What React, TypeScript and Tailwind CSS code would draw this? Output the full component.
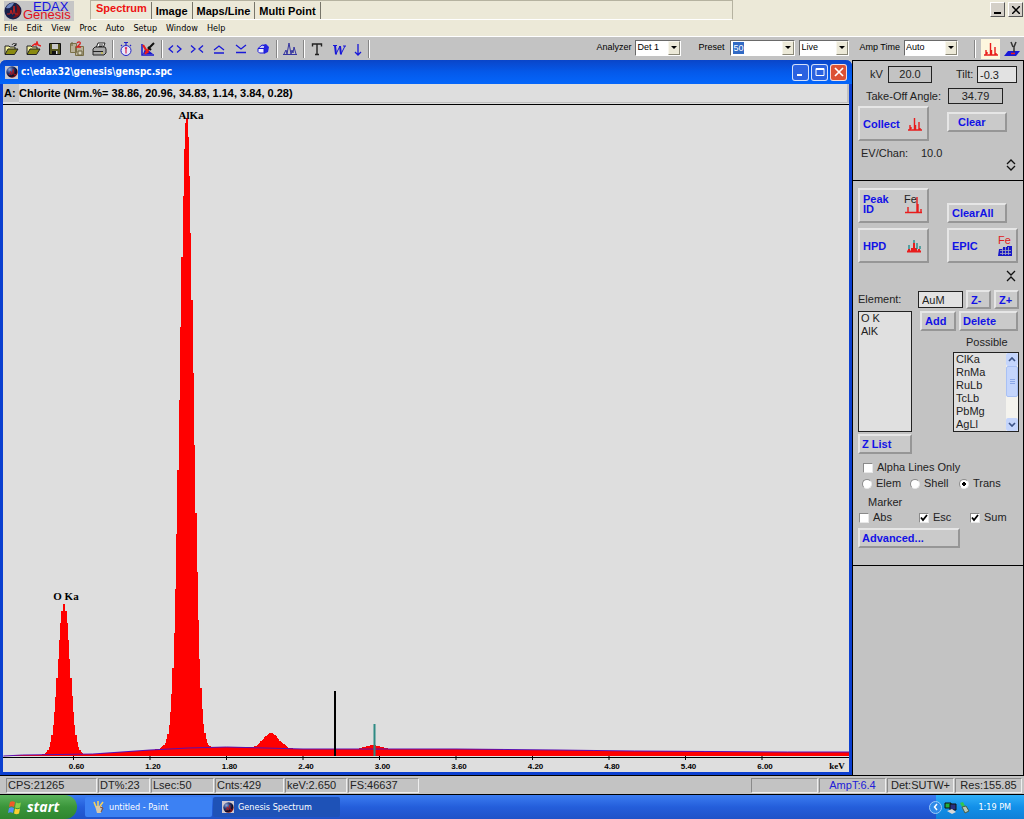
import { useState } from 'react';
import type { ReactNode } from 'react';

const TAHOMA = "font-['DejaVu_Sans_Condensed','DejaVu_Sans',sans-serif]";

// ---------- spectrum data ----------

const PX_PER_KEV = 127.5;
const X_OFFSET = -6;
const BASE_Y = 651;

const peaks = [
  { keV: 0.525, height: 151, sigma: 0.047 },
  { keV: 1.487, height: 630, sigma: 0.052 },
  { keV: 1.38, height: 5, sigma: 0.06 },
  { keV: 2.15, height: 15, sigma: 0.062 },
  { keV: 2.95, height: 4, sigma: 0.06 },
];

const background: [number, number][] = [
  [0.05, 0],
  [0.2, 1],
  [0.75, 2],
  [1.2, 6],
  [1.5, 8],
  [1.8, 9],
  [2.4, 7],
  [3.6, 7],
  [4.4, 6],
  [5.0, 5],
  [6.2, 4],
  [6.75, 4],
];

const ticks = ['0.60', '1.20', '1.80', '2.40', '3.00', '3.60', '4.20', '4.80', '5.40', '6.00'];

const toX = (keV: number) => keV * PX_PER_KEV + X_OFFSET;

function backgroundAt(keV: number) {
  for (let i = 1; i < background.length; i++) {
    const [x0, y0] = background[i - 1];
    const [x1, y1] = background[i];
    if (keV <= x1) return y0 + ((y1 - y0) * Math.max(0, keV - x0)) / (x1 - x0);
  }
  return 4;
}

// one step per 10 eV channel
function spectrumPath() {
  let d = `M0 ${BASE_Y}`;
  for (let keV = 0.06; keV < 6.69; keV += 0.01) {
    let counts = backgroundAt(keV);
    for (const p of peaks) {
      counts += p.height * Math.exp(-((keV - p.keV) ** 2) / (2 * p.sigma ** 2));
    }
    d += `H${toX(keV - 0.005).toFixed(1)}V${(BASE_Y - counts).toFixed(1)}`;
  }
  return d + `H846V${BASE_Y}Z`;
}

function Spectrum() {
  const line = background.map(([k, c]) => `${toX(k)},${BASE_Y - c}`).join(' ');
  return (
    <svg viewBox="0 0 846 667" className="block h-auto w-full bg-[#dedede]" role="img" aria-label="Spectrum">
      <path d={spectrumPath()} fill="#ff0000" shapeRendering="crispEdges" />
      <polyline points={line} fill="none" stroke="#5a10b0" strokeWidth="1" />
      <path d="M0 652.5H846" stroke="#000" />
      <path d="M332 586V651" stroke="#000" strokeWidth="2" />
      <path d="M371.5 619V651" stroke="#2e8b84" strokeWidth="2" />
      <g fontFamily="'Liberation Serif', serif" fontWeight="700" fontSize="11" textAnchor="middle">
        <text x="63" y="495">O Ka</text>
        <text x="188" y="14">AlKa</text>
      </g>
      {ticks.map((t) => (
        <g key={t}>
          <path d={`M${toX(Number(t))} 651V655`} stroke="#000" />
          <text
            x={toX(Number(t)) + 3}
            y="664"
            fontFamily="'Liberation Sans Narrow', 'Liberation Sans', sans-serif"
            fontSize="8"
            fontWeight="700"
            textAnchor="middle"
          >
            {t}
          </text>
        </g>
      ))}
      <text x="834" y="664" fontFamily="'Liberation Serif', serif" fontSize="9" fontWeight="700" textAnchor="middle">
        keV
      </text>
    </svg>
  );
}

// ---------- icons ----------

function Sphere({ className }: { className: string }) {
  return (
    <svg viewBox="0 0 18 18" className={className} aria-hidden="true">
      <defs>
        <radialGradient id="sphere" cx="30%" cy="28%" r="80%">
          <stop offset="0" stopColor="#8fa6d8" />
          <stop offset="0.4" stopColor="#283a78" />
          <stop offset="0.75" stopColor="#0c0c24" />
          <stop offset="1" stopColor="#901010" />
        </radialGradient>
      </defs>
      <circle cx="9" cy="9" r="8.5" fill="url(#sphere)" />
      <path d="M4 13h2l1-5 1 5h1l2-8 1 8h3" fill="none" stroke="#c01818" strokeWidth="1.2" />
    </svg>
  );
}

function Logo() {
  return (
    <svg viewBox="0 0 72 21" className="h-[21px] w-[72px] shrink-0 overflow-visible" role="img" aria-label="EDAX Genesis">
      <rect y="1" width="70" height="20" fill="#c6c6c6" />
      <circle cx="9" cy="11" r="8.500" fill="#182048" />
      <path d="M2 8a8 8 0 0 1 8-5c-2 4-4 6-8 5z" fill="#7088c0" />
      <path d="M12 4a8 8 0 0 1 4 10c-2 3-5 4-8 4 5-3 6-8 4-14z" fill="#7c1018" />
      <path d="M3 14h3l1-4 1 4h1l1-8 1 8h3" fill="none" stroke="#c02020" />
      <g fontFamily="'Liberation Sans', sans-serif" fontSize="13">
        <text x="29" y="11" fill="#1414e0">EDAX</text>
        <text x="19" y="19" fill="#e01020">Genesis</text>
      </g>
    </svg>
  );
}

function Icon({ children }: { children: ReactNode }) {
  return (
    <svg viewBox="0 0 16 16" className="size-4" fill="none" aria-hidden="true">
      {children}
    </svg>
  );
}

const folder = (
  <>
    <path d="M2 13V5h4l1 1h5v2" fill="#f4f09a" stroke="#222" />
    <path d="M2 13.500L5 8h10l-3.500 5.500z" fill="#8a8a10" stroke="#222" />
  </>
);

const redPeaks = <path d="M1 14h14M3 14V9M4 13V11M7.500 14V2M8.500 14V9M12 14V6M13 14v-2" stroke="#e81c1c" strokeWidth="1.4" />;

const icons: Record<string, ReactNode> = {
  Open: (
    <>
      {folder}
      <path d="M9 4c1-2 3-2 4 0m0-2v2.500h-2" stroke="#222" />
    </>
  ),
  'Open peaks': (
    <>
      {folder}
      <path d="M7 5l3-2 1 1 1-3 1 3 3 1" stroke="#e81c1c" strokeWidth="1.4" />
    </>
  ),
  Save: (
    <>
      <path d="M2.500 2.500h11v11h-11z" fill="#55551c" stroke="#111" />
      <path d="M5 3h6v5H5z" fill="#c8c8c8" />
      <path d="M5 10h6v3H5z" fill="#111" />
      <path d="M9 10h1.500v3H9z" fill="#ddd" />
    </>
  ),
  'Save as': (
    <>
      <path d="M1.500 2.500h6v9h-6zM6.500 5.500h8v9h-8z" fill="#b8b098" stroke="#7a7048" />
      <path d="M3 1v4M9 10h4v4H9z" stroke="#68603c" fill="#d8d4c0" />
      <path d="M8 2c2-2 4-1 3 1L8 6h4" stroke="#d82020" strokeWidth="1.300" />
    </>
  ),
  Print: (
    <>
      <path d="M5 7l2-5h7l-2 5" fill="#fff" stroke="#222" />
      <path d="M2 8l2-2h10l1 2v4l-2 2H2z" fill="#a8a8a8" stroke="#222" />
      <path d="M2 10.500h10M8 4h4M7.500 5.500h4" stroke="#222" />
      <path d="M10 12h2" stroke="#d8c820" />
    </>
  ),
  Timer: (
    <>
      <circle cx="8" cy="9.500" r="5" fill="#e8e8f8" stroke="#2424c8" />
      <path d="M6 1.500h4M8 1.500V4M12 4l1 1M4 4L3 5" stroke="#2424c8" strokeWidth="1.200" />
      <path d="M8 6.500v6M7 7.500l1-1 1 1" stroke="#d81c50" strokeWidth="1.200" />
    </>
  ),
  Clear: (
    <>
      <path d="M2 3v11h12" stroke="#1818d0" strokeWidth="1.500" />
      <path d="M3 13l2-5 3 1 5 4z" fill="#1818d0" />
      <path d="M3 4l5 8M5 13l4-5" stroke="#e81c1c" strokeWidth="2.200" />
      <path d="M8 8l6-6M8 6l3 3" stroke="#111" strokeWidth="2" />
    </>
  ),
  Expand: <path d="M6 4.500L2 8l4 3.500M10 4.500L14 8l-4 3.500" stroke="#1818d8" strokeWidth="1.300" />,
  Contract: <path d="M2 4.500L6 8l-4 3.500M14 4.500L10 8l4 3.500" stroke="#1818d8" strokeWidth="1.300" />,
  'Scale up': <path d="M3 9l5-4 5 4M3 12h10" stroke="#1818d8" strokeWidth="1.300" />,
  'Scale down': <path d="M3 4l5 4 5-4M3 11.500h10" stroke="#1818d8" strokeWidth="1.300" />,
  Cube: (
    <>
      <path d="M7 4l4-1 3 3-1 5-4 2V7z" fill="#2424e0" />
      <path d="M3 7.500h6v4.500H4.500L3 10.500z" fill="#eef" stroke="#1818d8" />
      <path d="M3 7.500l4-3.500 3 1-1 2.500z" fill="#c8c8f4" stroke="#1818d8" />
    </>
  ),
  Peaks: <path d="M1 13.500h14M2 13l2-4 1 4 2-11 2 11 1-4 1 3 1-6 2 7" stroke="#3434a0" strokeWidth="1" />,
  Text: <path d="M3.500 5.500V3h9v2.500M8 3v11M6 13.500h4" stroke="#222" strokeWidth="1.400" />,
  Word: (
    <>
      <path d="M4 4.500l1 9M9 5l1 8.500" stroke="#1818d8" strokeWidth="2" />
      <path d="M5 13l4-8M10 13l4-8M2 4.500h4M12 5h3" stroke="#1818d8" />
    </>
  ),
  Down: <path d="M8 3v11M5 11l3 3 3-3" stroke="#1818d8" strokeWidth="1.300" />,
};

function ToolButton({ name, narrow }: { name: string; narrow?: boolean }) {
  return (
    <button type="button" aria-label={name} className={`flex h-5 items-center justify-center ${narrow ? 'w-4' : 'w-[22px]'}`}>
      <Icon>{icons[name]}</Icon>
    </button>
  );
}

function Separator() {
  return (
    <span className="flex w-[5px] justify-center">
      <span className="h-[18px] border-l border-r border-l-[#868686] border-r-white" />
    </span>
  );
}

// ---------- header ----------

const tabs = ['Spectrum', 'Image', 'Maps/Line', 'Multi Point'];
const menus = ['File', 'Edit', 'View', 'Proc', 'Auto', 'Setup', 'Window', 'Help'];

function Header() {
  const [active, setActive] = useState('Spectrum');
  return (
    <header className="bg-[#ece9d8]">
      <div className="flex h-[21px] items-start pl-1">
        <Logo />
        <nav className="ml-[14px] flex h-5 w-[643px] items-stretch border border-[#b5b2a0] border-b-white pt-px">
          {tabs.map((tab) => (
            <button
              key={tab}
              type="button"
              onClick={() => setActive(tab)}
              className={`border-r border-[#77756a] text-[11px] leading-none font-bold ${
                tab === active ? 'pr-[4px] pb-1 pl-[5px] text-[#ee1111]' : 'px-[4px] pt-px text-black'
              }`}
            >
              {tab}
            </button>
          ))}
        </nav>
        <div className="ml-auto flex gap-[3px] pt-[2px] pr-[1px]">
          <button type="button" aria-label="Minimize" className="flex size-[15px] items-end justify-center border border-white border-r-[#555] border-b-[#555] bg-[#d4d0c8] pb-[2px]">
            <span className="h-0.5 w-[7px] bg-black" />
          </button>
          <button type="button" aria-label="Close" className="flex size-[15px] items-center justify-center border border-white border-r-[#555] border-b-[#555] bg-[#d4d0c8]">
            <svg viewBox="0 0 8 8" className="size-2" aria-hidden="true">
              <path d="M0 0l8 8M8 0L0 8" stroke="#000" strokeWidth="1.500" />
            </svg>
          </button>
        </div>
      </div>
      <nav className={`flex h-4 items-center gap-[9px] border-b border-white pl-1 text-[9px] leading-none ${TAHOMA}`}>
        {menus.map((m) => (
          <button key={m} type="button">
            {m}
          </button>
        ))}
      </nav>
    </header>
  );
}

function Arrow() {
  return (
    <span className="pointer-events-none flex w-3 shrink-0 items-center justify-center border border-[#f8f6ee] border-r-[#8a8878] border-b-[#8a8878] bg-[#ece9d8]">
      <svg viewBox="0 0 6 3" className="h-[3px] w-1.5" aria-hidden="true">
        <path d="M0 0h6L3 3z" />
      </svg>
    </span>
  );
}

const fieldClass = 'flex h-4 border border-[#6a6a6a] border-r-white border-b-white bg-white text-[9px]';

function Dropdown({ label, value, width, hideLabel }: { label: string; value: string; width: string; hideLabel?: boolean }) {
  return (
    <label className="flex items-center gap-1">
      {!hideLabel && <span>{label}</span>}
      <span className={`${fieldClass} ${width}`}>
        <select aria-label={label} defaultValue={value} className="min-w-0 flex-1 appearance-none pl-px">
          <option>{value}</option>
        </select>
        <Arrow />
      </span>
    </label>
  );
}

function Toolbar() {
  return (
    <div className="flex h-[23px] items-center bg-[#c3c3c3] text-[9px] leading-none">
      {['Open', 'Open peaks', 'Save', 'Save as', 'Print'].map((n) => (
        <ToolButton key={n} name={n} />
      ))}
      <Separator />
      <ToolButton name="Timer" />
      <ToolButton name="Clear" />
      <Separator />
      {['Expand', 'Contract', 'Scale up', 'Scale down', 'Cube'].map((n) => (
        <ToolButton key={n} name={n} />
      ))}
      <Separator />
      <ToolButton name="Peaks" />
      <Separator />
      <ToolButton name="Text" />
      <ToolButton name="Word" />
      <ToolButton name="Down" narrow />
      <Separator />

      <div className="mr-[17px] ml-auto flex pb-0.5">
        <Dropdown label="Analyzer" value="Det 1" width="w-[46px]" />
      </div>
      <label className="mr-1 flex items-center gap-1.5 pb-0.5">
        <span>Preset</span>
        <span className={`${fieldClass} w-[65px] items-stretch justify-between`}>
          <input type="text" defaultValue="50" className="my-px ml-[2px] w-[11px] bg-[#316ac5] text-white" />
          <Arrow />
        </span>
      </label>
      <div className="mr-[10px] pb-0.5">
        <Dropdown label="Preset mode" value="Live" width="w-[50px]" hideLabel />
      </div>
      <div className="mr-[14px] pb-0.5">
        <Dropdown label="Amp Time" value="Auto" width="w-[54px]" />
      </div>
      <Separator />
      <button type="button" aria-label="Spectrum view" className="ml-[4px] flex h-5 w-[19px] items-center justify-center bg-[#fdf6de]">
        <Icon>{redPeaks}</Icon>
      </button>
      <button type="button" aria-label="Stage view" className="mr-1 ml-1 flex h-5 w-4 items-center justify-center">
        <Icon>
          <path d="M4 10h12l-4 5H0z" fill="#1818d8" />
          <path d="M7 1l2 5M12 1l-2 5v5" stroke="#333" strokeWidth="1.500" />
          <path d="M7 12.500h4" stroke="#e81c1c" strokeWidth="1.500" />
        </Icon>
      </button>
    </div>
  );
}

// ---------- spectrum window ----------

const captionButton = 'flex size-[17px] items-center justify-center rounded-[3px] border border-white/80';

function SpectrumWindow() {
  return (
    <section className="min-w-0 flex-1 rounded-t-md border-x-[3px] border-b-[3px] border-[#0b3fd0] bg-[#dedede]">
      <div className="-mx-[3px] flex h-6 items-center rounded-t-md bg-linear-to-b from-[#0a45c8] via-[#0459ea] to-[#0466fb] px-[5px]">
        <span className="mr-[3px] flex size-[13px] items-center justify-center bg-[#c8c8d0]">
          <Sphere className="size-3" />
        </span>
        <h1 className={`text-[10px] leading-none font-bold text-white ${TAHOMA}`}>c:\edax32\genesis\genspc.spc</h1>
        <div className="ml-auto flex gap-0.5">
          <button type="button" aria-label="Minimize" className={`${captionButton} bg-[#2b62e0]`}>
            <svg viewBox="0 0 12 12" className="size-3" aria-hidden="true">
              <path d="M2 9h5" stroke="#fff" strokeWidth="2" />
            </svg>
          </button>
          <button type="button" aria-label="Maximize" className={`${captionButton} bg-[#2b62e0]`}>
            <svg viewBox="0 0 12 12" className="size-3" aria-hidden="true">
              <path d="M2 2.500h8v7H2zM2 3.500h8" fill="none" stroke="#fff" />
            </svg>
          </button>
          <button type="button" aria-label="Close" className={`${captionButton} bg-[#dc5234]`}>
            <svg viewBox="0 0 12 12" className="size-3" aria-hidden="true">
              <path d="M2 2l8 8M10 2l-8 8" stroke="#fff" strokeWidth="1.700" />
            </svg>
          </button>
        </div>
      </div>
      <div className="flex h-[21px] items-start border-b border-black text-[11px] leading-[18px] font-bold">
        <span className="w-4 bg-[#c6c6c6] pl-px">A:</span>
        <span className="flex-1 border-r-2 border-b border-[#c0c0c0]">Chlorite (Nrm.%= 38.86, 20.96, 34.83, 1.14, 3.84, 0.28)</span>
      </div>
      <Spectrum />
    </section>
  );
}

// ---------- control panel ----------

function PanelButton({ children, className }: { children: ReactNode; className: string }) {
  return (
    <button
      type="button"
      className={`flex items-center border-2 border-[#e6e6e6] border-r-[#969696] border-b-[#969696] bg-[#cacaca] text-left text-[11px] leading-[10px] font-bold text-[#1212e6] ${className}`}
    >
      {children}
    </button>
  );
}

function Check({ label, type, name, checked }: { label: string; type: 'checkbox' | 'radio'; name?: string; checked?: boolean }) {
  return (
    <label className="flex items-center gap-1 leading-none">
      <input
        type={type}
        name={name}
        defaultChecked={checked}
        className={`peer size-[10px] shrink-0 appearance-none border border-[#8a8a8a] border-r-[#e8e8e8] border-b-[#e8e8e8] bg-white ${
          type === 'radio' ? 'rounded-full checked:bg-[radial-gradient(circle,#000_0_2px,#fff_2px)]' : ''
        }`}
      />
      {type === 'checkbox' && (
        <svg viewBox="0 0 8 8" className="pointer-events-none invisible -ml-[13px] mr-[1px] size-2 peer-checked:visible" aria-hidden="true">
          <path d="M1 3.500L3 6l4-5" fill="none" stroke="#000" strokeWidth="1.800" />
        </svg>
      )}
      <span>{label}</span>
    </label>
  );
}

const valueBox = 'flex items-center justify-center border border-[#222]';

function ControlPanel() {
  const [elements] = useState(['O K', 'AlK']);
  const possible = ['ClKa', 'RnMa', 'RuLb', 'TcLb', 'PbMg', 'AgLl'];

  return (
    <aside className="w-[172px] shrink-0 border-x border-t border-black bg-[#c3c3c3] text-[11px] leading-none text-[#222]">
      <section className="h-[120px] border-b border-black pt-[5px] pl-[5px]">
        <div className="flex items-center">
          <span className="ml-3 w-[18px]">kV</span>
          <output className={`${valueBox} h-[17px] w-[44px]`}>20.0</output>
          <label htmlFor="tilt" className="ml-[24px] w-[21px]">Tilt:</label>
          <input id="tilt" type="text" defaultValue="-0.3" className="h-[17px] w-10 border border-[#222] bg-[#e2e2e2] pl-0.5" />
        </div>
        <div className="mt-[5px] flex items-center">
          <span className="ml-2 w-[82px]">Take-Off Angle:</span>
          <output className={`${valueBox} h-4 w-[55px]`}>34.79</output>
        </div>
        <div className="mt-0.5 flex items-center">
          <PanelButton className="h-[35px] w-[71px] justify-between pr-1 pl-[3px]">
            Collect
            <Icon>{redPeaks}</Icon>
          </PanelButton>
          <PanelButton className="mt-[-4px] ml-[18px] h-5 w-[60px] pl-[9px]">Clear</PanelButton>
        </div>
        <div className="mt-[7px] flex justify-between pr-[7px] pl-[3px]">
          <p className="flex">
            <span className="w-[60px]">EV/Chan:</span>
            <span>10.0</span>
          </p>
          <button type="button" aria-label="Collapse section" className="mt-[11px]">
            <svg viewBox="0 0 10 12" className="h-3 w-[10px]" aria-hidden="true">
              <path d="M1 5l4-4 4 4M1 7l4 4 4-4" fill="none" stroke="#111" strokeWidth="1.300" />
            </svg>
          </button>
        </div>
      </section>

      <section className="h-[385px] border-b border-black pt-[7px] pl-[5px]">
        <div className="flex items-end">
          <PanelButton className="h-[35px] w-[71px] justify-between pr-[3px] pb-1 pl-[3px]">
            <span className="w-6">Peak ID</span>
            <svg viewBox="0 0 20 22" className="h-[22px] w-5" aria-hidden="true">
              <text x="0" y="10" fontSize="11" fontWeight="400" fill="#222">Fe</text>
              <path d="M1 19.500h17M4 19v-5M13 19V4M14 19v-8M17 19v-3" fill="none" stroke="#e81c1c" strokeWidth="1.400" />
            </svg>
          </PanelButton>
          <PanelButton className="ml-[18px] h-5 w-[60px] pl-[3px]">ClearAll</PanelButton>
        </div>
        <div className="mt-[5px] flex">
          <PanelButton className="h-[35px] w-[71px] justify-between pr-[5px] pl-[3px]">
            HPD
            <svg viewBox="0 0 16 16" className="size-4" aria-hidden="true">
              <path d="M1 13.500h14M3 13v-2M8 13V5M13 13v-2M6 13v-3M10 13v-3" stroke="#e81c1c" strokeWidth="2" />
              <path d="M3 11V7M8 5V2M11 11V5M14 11V8" stroke="#188888" strokeWidth="1.300" />
            </svg>
          </PanelButton>
          <PanelButton className="ml-[18px] h-[35px] w-[71px] justify-between pr-[3px] pl-[3px]">
            EPIC
            <svg viewBox="0 0 16 22" className="h-[22px] w-4" aria-hidden="true">
              <text x="1" y="9" fontSize="11" fontWeight="400" fill="#e02020">Fe</text>
              <path d="M2 14h4v-2h4v-1h5v10H1z" fill="#1818c8" />
              <path d="M3 15.500h11M3 18.500h11M5.500 13v7M8.500 12v8M11.500 12v8" stroke="#aab" strokeWidth="0.800" />
            </svg>
          </PanelButton>
        </div>
        <div className="mt-[7px] flex justify-end pr-[7px]">
          <button type="button" aria-label="Expand section">
            <svg viewBox="0 0 10 12" className="h-3 w-[10px]" aria-hidden="true">
              <path d="M1 1l4 4 4-4M1 11l4-4 4 4" fill="none" stroke="#111" strokeWidth="1.300" />
            </svg>
          </button>
        </div>

        <div className="mt-2 flex items-center">
          <label htmlFor="element" className="w-[60px]">Element:</label>
          <input id="element" type="text" defaultValue="AuM" className="mr-[3px] h-[17px] w-[45px] border border-[#222] bg-[#e2e2e2] pl-[3px]" />
          <PanelButton className="mr-[3px] h-[19px] w-[25px] pl-[3px]">Z-</PanelButton>
          <PanelButton className="h-[19px] w-[25px] pl-[3px]">Z+</PanelButton>
        </div>

        <div className="mt-0.5 flex">
          <ul role="listbox" aria-label="Elements" className="h-[121px] w-[54px] border border-[#222] bg-[#e0e0e0] pl-0.5 leading-[13px]">
            {elements.map((el) => (
              <li key={el} role="option" aria-selected="false">{el}</li>
            ))}
          </ul>
          <div className="flex flex-1 flex-col pl-2">
            <div className="flex gap-[3px]">
              <PanelButton className="h-5 w-[36px] pl-[3px]">Add</PanelButton>
              <PanelButton className="h-5 w-[59px] pl-[2px]">Delete</PanelButton>
            </div>
            <span className="mt-[6px] ml-[46px]">Possible</span>
            <div className="mt-[4px] ml-[33px] flex h-20 w-[66px] border border-[#222] bg-[#e0e0e0]">
              <ul role="listbox" aria-label="Possible" className="flex-1 pl-0.5 leading-[13px]">
                {possible.map((el) => (
                  <li key={el} role="option" aria-selected="false">{el}</li>
                ))}
              </ul>
              <div className="flex w-3 flex-col bg-[#f4f3ee]">
                <button type="button" aria-label="Scroll up" className="flex h-[13px] items-center justify-center rounded-xs bg-[#c4d5fc]">
                  <svg viewBox="0 0 8 5" className="h-[5px] w-2" aria-hidden="true">
                    <path d="M1 4l3-3 3 3" fill="none" stroke="#3c5488" strokeWidth="1.700" />
                  </svg>
                </button>
                <span className="flex h-[31px] flex-col items-center justify-center gap-px rounded-xs border border-[#a8c0f4] bg-[#c4d5fc]">
                  <span className="h-px w-[5px] bg-[#8ca8e8]" />
                  <span className="h-px w-[5px] bg-[#8ca8e8]" />
                  <span className="h-px w-[5px] bg-[#8ca8e8]" />
                </span>
                <button type="button" aria-label="Scroll down" className="mt-auto flex h-[13px] items-center justify-center rounded-xs bg-[#c4d5fc]">
                  <svg viewBox="0 0 8 5" className="h-[5px] w-2" aria-hidden="true">
                    <path d="M1 1l3 3 3-3" fill="none" stroke="#3c5488" strokeWidth="1.700" />
                  </svg>
                </button>
              </div>
            </div>
          </div>
        </div>

        <PanelButton className="mt-[2px] h-5 w-[54px] pl-[2px]">Z List</PanelButton>

        <div className="mt-2 pl-[5px]">
          <Check type="checkbox" label="Alpha Lines Only" />
        </div>
        <div className="mt-[5px] flex pl-[4px]">
          <div className="w-[48px]"><Check type="radio" name="mode" label="Elem" /></div>
          <div className="w-[49px]"><Check type="radio" name="mode" label="Shell" /></div>
          <Check type="radio" name="mode" label="Trans" checked />
        </div>
        <p className="mt-2 pl-[10px]">Marker</p>
        <div className="mt-1 flex pl-px">
          <div className="w-[60px]"><Check type="checkbox" label="Abs" /></div>
          <div className="w-[51px]"><Check type="checkbox" label="Esc" checked /></div>
          <Check type="checkbox" label="Sum" checked />
        </div>
        <PanelButton className="mt-[5px] h-5 w-[102px] pl-[2px]">Advanced...</PanelButton>
      </section>
    </aside>
  );
}

// ---------- bottom bars ----------

function StatusCell({ children, className }: { children?: ReactNode; className: string }) {
  return (
    <span className={`flex h-[15px] items-center border border-[#8a8a8a] border-r-[#eee] border-b-[#eee] ${className}`}>
      {children}
    </span>
  );
}

function StatusBar() {
  return (
    <footer className="flex h-5 items-center gap-px border-y border-black bg-[#c3c3c3] pr-0.5 pl-1.5 text-[11px] leading-none text-[#222]">
      <StatusCell className="w-[91px] pl-px">CPS:21265</StatusCell>
      <StatusCell className="w-[52px] pl-px">DT%:23</StatusCell>
      <StatusCell className="w-[63px] pl-px">Lsec:50</StatusCell>
      <StatusCell className="w-[69px] pl-px">Cnts:429</StatusCell>
      <StatusCell className="w-[62px] pl-px">keV:2.650</StatusCell>
      <StatusCell className="w-[71px] pl-px">FS:46637</StatusCell>
      <StatusCell className="ml-auto w-[67px]" />
      <StatusCell className="w-[67px] justify-center text-[#2020d8]">AmpT:6.4</StatusCell>
      <StatusCell className="w-[67px] justify-center">Det:SUTW+</StatusCell>
      <StatusCell className="w-[67px] justify-center">Res:155.85</StatusCell>
    </footer>
  );
}

function Taskbar() {
  return (
    <div className={`flex h-6 items-stretch bg-linear-to-b from-[#3c7cf0] via-[#245edb] to-[#1f52c8] text-[9px] leading-none text-white ${TAHOMA}`}>
      <button type="button" className="mr-2 flex w-[77px] items-center rounded-r-xl bg-linear-to-b from-[#5cb45c] via-[#3a953a] to-[#2f862f] pl-[7px]">
        <svg viewBox="0 0 16 16" className="mr-[4px] size-4" aria-hidden="true">
          <path d="M3 3c2-1 3-1 5 0L7 8c-2-1-3-1-5 0z" fill="#f05a28" />
          <path d="M9 3.500c2 1 3 1 5 0l-1 5c-2 1-3 1-5 0z" fill="#8cd048" />
          <path d="M2 9c2-1 3-1 5 0l-1 5c-2-1-3-1-5 0z" fill="#5090f8" />
          <path d="M8 9.500c2 1 3 1 5 0l-1 5c-2 1-3 1-5 0z" fill="#f8d030" />
        </svg>
        <span className="font-['Open_Sans','Noto_Sans',sans-serif] text-[14px] leading-none font-bold italic">start</span>
      </button>
      <button type="button" className="my-0.5 mr-px flex w-[127px] items-center gap-1 rounded-xs bg-[#3c81f3] pl-2">
        <svg viewBox="0 0 12 13" className="h-[13px] w-3" aria-hidden="true">
          <path d="M2 5h7l-1 7H4z" fill="#d8c8a8" />
          <path d="M3 6L1 1M5 5V0M7 5l3-4" stroke="#f0d060" strokeWidth="1.600" />
          <path d="M7 6l3 1-2 4" fill="none" stroke="#885030" />
        </svg>
        untitled - Paint
      </button>
      <button type="button" className="my-0.5 flex w-[127px] items-center gap-1 rounded-xs bg-[#1e52b7] pl-[9px]">
        <span className="flex size-3 items-center justify-center bg-[#d0c8d0]">
          <Sphere className="size-[11px]" />
        </span>
        Genesis Spectrum
      </button>
      <div className="ml-auto flex w-[95px] items-center">
        <button type="button" aria-label="Show hidden icons" className="z-10 flex size-[13px] items-center justify-center rounded-full border border-[#9ccaf8] bg-[#2f8ae8]">
          <svg viewBox="0 0 6 8" className="h-2 w-1.5" aria-hidden="true">
            <path d="M4 1L1.500 4 4 7" fill="none" stroke="#fff" strokeWidth="1.500" />
          </svg>
        </button>
        <div className="-ml-1.5 flex flex-1 items-center self-stretch bg-linear-to-b from-[#30b0f8] via-[#1290e9] to-[#1080d8] pl-2">
          <svg viewBox="0 0 26 13" className="h-[13px] w-[26px]" aria-hidden="true">
            <path d="M1 2h6v5H1z" fill="#20b040" stroke="#111" />
            <path d="M6 3h6v6H6z" fill="#283080" stroke="#111" />
            <path d="M3 10l5-2 4 3-4 2z" fill="#d8d8d8" />
            <path d="M16 2l3-1 2 4-3 1z" fill="#30c850" />
            <path d="M18 6l4-1 3 5-4 2z" fill="#b8c8b8" stroke="#486048" />
          </svg>
          <time className="mr-[13px] ml-auto">1:19 PM</time>
        </div>
      </div>
    </div>
  );
}

export default function App() {
  return (
    <div className="flex min-h-screen flex-col bg-[#c3c3c3] font-['Liberation_Sans',Arial,sans-serif] text-black">
      <Header />
      <Toolbar />
      <main className="flex flex-1 items-stretch">
        <SpectrumWindow />
        <ControlPanel />
      </main>
      <StatusBar />
      <Taskbar />
    </div>
  );
}
